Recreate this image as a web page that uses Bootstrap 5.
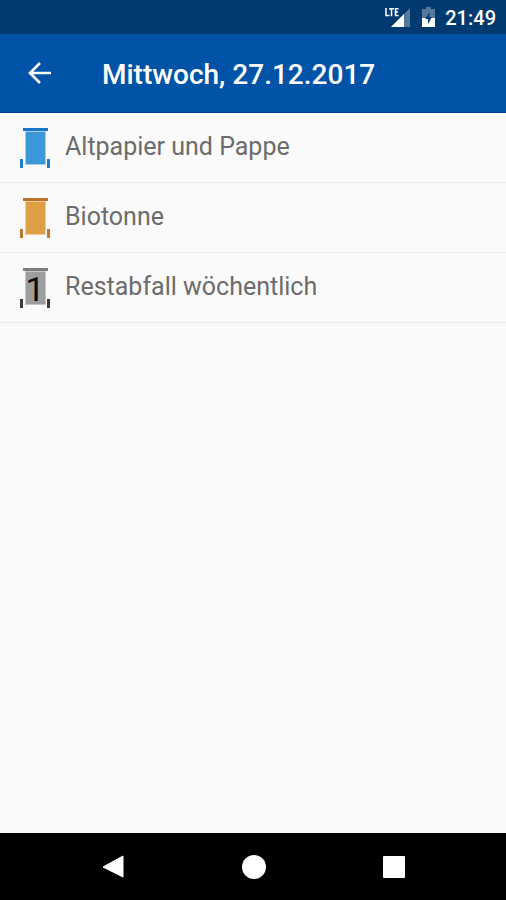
<!DOCTYPE html>
<html lang="de">
<head>
<meta charset="utf-8">
<meta name="viewport" content="width=device-width, initial-scale=1">
<title>Mittwoch, 27.12.2017</title>
<link href="https://cdn.jsdelivr.net/npm/bootstrap@5.3.0/dist/css/bootstrap.min.css" rel="stylesheet">
<style>
  body { font-family: Roboto, "Noto Sans", sans-serif; background: #fafafa; }
  .status-strip { background: #003a70; height: 34px; padding: 2px 10px 0; font-size: 20px; line-height: 24px; }
  .app-header { background: #0053a6; height: 79px; padding: 0 20px; border-bottom: 1px solid #003c9c; }
  .back-btn { width: 38px; height: 38px; }
  .app-title { font-size: 28px; line-height: 36px; margin-left: 44px; padding-top: 4px; }
  .bin-item { height: 70px; padding: 0 20px; gap: 14px; background: #fafafa; color: #6c6c6c; --bs-border-color: #ebebeb; font-size: 25px; line-height: 32px; }
  .bin-label { padding-bottom: 2px; }
  .system-nav { background: #000; height: 67px; padding: 0 42px 0 44px; }
</style>
</head>
<body class="d-flex flex-column min-vh-100">
<div class="status-strip d-flex align-items-center justify-content-end text-white fw-medium">
  <svg width="60" height="34" viewBox="0 0 60 34" aria-hidden="true">
    <path d="M25 7V26H6z" fill="#55799c"/>
    <path d="M19 13V26H6z" fill="#fff"/>
    <path d="M0 5H14V16H8L4 18H0z" fill="#003a70"/>
    <path d="M1 7V14.500H4.500M4 7.700H9M6.500 7.700V15.200M13.500 7.700H10.500V14.500H13.500M10.500 11H13" fill="none" stroke="#fff" stroke-width="1.500"/>
    <path d="M41 6H46V8H50V17H37V8H41z" fill="#55799c"/>
    <path d="M37 17H50V26H37z" fill="#fff"/>
    <path d="M45 11L40 18H43V23L47 16H44z" fill="#003a70"/>
  </svg>
  <span>21:49</span>
</div>
<header class="app-header d-flex align-items-center">
  <button type="button" class="back-btn btn p-0 border-0 d-flex align-items-center justify-content-center" aria-label="Zurück">
    <svg width="38" height="38" viewBox="0 0 38 38" aria-hidden="true"><path d="M31 19H10M20 9L10 19L20 29" fill="none" stroke="#fff" stroke-width="2.600"/></svg>
  </button>
  <h1 class="app-title text-white fw-medium mb-0">Mittwoch, 27.12.2017</h1>
</header>
<main class="flex-grow-1">
  <ul class="list-group list-group-flush border-bottom-0">
    <li class="bin-item list-group-item d-flex align-items-center border-bottom">
      <svg width="31" height="42" viewBox="0 0 31 42" aria-hidden="true"><path d="M3 1H28V4H3z" fill="#1b75c9"/><path d="M5 4H26V38H5z" fill="#a4cdee"/><path d="M6 5H25V37H6z" fill="#3d98da"/><path d="M0 32H3V41H0zM27 32H30V41H27z" fill="#1f7ccb"/></svg>
      <span class="bin-label">Altpapier und Pappe</span>
    </li>
    <li class="bin-item list-group-item d-flex align-items-center border-bottom">
      <svg width="31" height="42" viewBox="0 0 31 42" aria-hidden="true"><path d="M3 1H28V4H3z" fill="#b9702a"/><path d="M5 4H26V38H5z" fill="#efcf9f"/><path d="M6 5H25V37H6z" fill="#dfa045"/><path d="M0 32H3V41H0zM27 32H30V41H27z" fill="#bd782f"/></svg>
      <span class="bin-label">Biotonne</span>
    </li>
    <li class="bin-item list-group-item d-flex align-items-center border-bottom">
      <svg width="31" height="42" viewBox="0 0 31 42" aria-hidden="true"><path d="M3 1H28V4H3z" fill="#7d7d7d"/><path d="M5 4H26V38H5z" fill="#c4c4c4"/><path d="M6 5H25V37H6z" fill="#9d9d9d"/><path d="M0 32H3V41H0zM27 32H30V41H27z" fill="#3c3c3c"/><text x="15" y="34" text-anchor="middle" font-family="Roboto, sans-serif" font-size="34" font-weight="400" fill="#080808">1</text></svg>
      <span class="bin-label">Restabfall wöchentlich</span>
    </li>
  </ul>
</main>
<nav class="system-nav d-flex align-items-center" aria-label="System">
  <button type="button" class="btn p-0 border-0 flex-fill" aria-label="Zurück"><svg width="26" height="26" viewBox="0 0 26 26"><path d="M22 2V23L2 13z" fill="#fff" stroke="#fff" stroke-linejoin="round"/></svg></button>
  <button type="button" class="btn p-0 border-0 flex-fill" aria-label="Startseite"><svg width="26" height="26" viewBox="0 0 26 26"><circle cx="13" cy="13" r="12" fill="#fff"/></svg></button>
  <button type="button" class="btn p-0 border-0 flex-fill" aria-label="Übersicht"><svg width="26" height="26" viewBox="0 0 26 26"><rect x="2" y="2" width="22" height="22" rx="1" fill="#fff"/></svg></button>
</nav>
<script src="https://cdn.jsdelivr.net/npm/bootstrap@5.3.0/dist/js/bootstrap.bundle.min.js"></script>
</body>
</html>
